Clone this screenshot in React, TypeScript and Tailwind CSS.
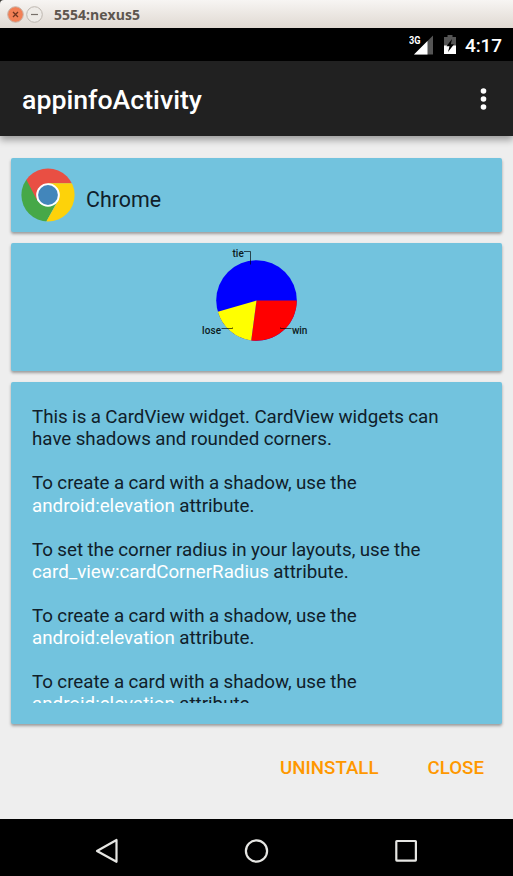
import React from "react";

function TitleBar() {
  return (
    <div className="flex h-7 shrink-0 items-center rounded-tl-[4px] bg-linear-to-b from-[#f7f5f3] to-[#e0d9d2] pl-[7px] pt-px">
      <svg width="38" height="18" viewBox="0 0 38 18" fill="none">
        <circle cx="8.5" cy="8.5" r="7.8" fill="#f28056" stroke="#c9b5aa" />
        <path d="M6 6l5 5M11 6l-5 5" stroke="#70341f" strokeWidth="1.3" />
        <circle cx="27.5" cy="8.5" r="7.8" fill="#eeebe7" stroke="#bdb7b0" />
        <path d="M24 8.5h7" stroke="#77706a" strokeWidth="1.2" />
      </svg>
      <span className="ml-[9px] mt-px whitespace-nowrap font-['Open_Sans',sans-serif] text-[14px] font-bold leading-none tracking-[0.02px] text-[#5d564f]">
        5554:nexus5
      </span>
    </div>
  );
}

function StatusBar() {
  return (
    <div className="flex h-[33px] shrink-0 items-center justify-end bg-black pr-[11px] text-white">
      <svg width="50" height="33" viewBox="0 0 50 33" className="mr-[6px]">
        <path d="M5 26.500L24 7.500V26.500Z" fill="#555" />
        <path d="M5 26.500L18.500 13V26.500Z" fill="white" />
        <path d="M0 7h12v8.500H0Z" fill="black" />
        <text x="0" y="15.500" fontSize="11" fontWeight="700" fill="white" textLength="11.500" lengthAdjust="spacingAndGlyphs">3G</text>
        <path d="M35 9h3.500V7h5v2H47v17H35Z" fill="#555" />
        <path d="M35 17.500h12V26H35Z" fill="white" />
        <path d="M43 11l-5.500 7.200h3L39 24l6-7.700h-3.200Z" fill="black" />
      </svg>
      <span className="mt-px text-[19px] font-medium leading-none tracking-[-0.1px]">4:17</span>
    </div>
  );
}

function AppBar() {
  return (
    <header className="relative flex h-[75px] shrink-0 items-center justify-between bg-[#212121] pl-[22px] pr-[26px] pt-[3px] text-white shadow-[0_4px_7px_rgba(0,0,0,0.35)]">
      <h1 className="text-[26.7px] font-medium leading-none">appinfoActivity</h1>
      <svg width="7" height="24" viewBox="0 0 7 24" fill="white" className="-mt-[2px]">
        <circle cx="3.500" cy="4" r="2.8" />
        <circle cx="3.500" cy="12" r="2.8" />
        <circle cx="3.500" cy="20" r="2.8" />
      </svg>
    </header>
  );
}

function ChromeLogo() {
  return (
    <svg width="54" height="54" viewBox="0 0 54 54">
      <defs>
        <clipPath id="disc"><circle cx="27" cy="27" r="26.6" /></clipPath>
      </defs>
      <g clipPath="url(#disc)">
        <path d="M0 0H54V15.200H27L15 33L5 12L0 8Z" fill="#e94f43" />
        <path d="M0 8L5.500 12L16.500 33L27 38L37 32L24 56H0Z" fill="#46a848" />
        <path d="M27 15.200H54V54H25L37.500 32Z" fill="#fdd20a" />
      </g>
      <circle cx="27" cy="27" r="11.8" fill="white" />
      <circle cx="27" cy="27" r="9.9" fill="#4286bb" />
    </svg>
  );
}

function PieChart() {
  return (
    <svg width="120" height="100" viewBox="197 243 120 100" fontSize="10" fill="#0b1a20">
      <circle cx="256.500" cy="300.500" r="40.300" fill="#00f" />
      <path d="M256.500 300.500H296.800A40.300 40.300 0 0 1 251.200 340.450Z" fill="#f00" />
      <path d="M256.500 300.500L251.200 340.450A40.300 40.300 0 0 1 217.800 311.700Z" fill="#ff0" />
      <path d="M244 251.500h6.500v13M221.500 328.500h11v-1M291.500 328.500h-11v-1" fill="none" stroke="#000" strokeOpacity=".65" strokeWidth="1" />
      <text x="232.500" y="257" fontWeight="500" textLength="11.300">tie</text>
      <text x="202" y="334" fontWeight="500" textLength="19">lose</text>
      <text x="292" y="334" fontWeight="500" textLength="15.300">win</text>
    </svg>
  );
}

function Card({ className, children }: { className: string; children: React.ReactNode }) {
  return (
    <section className={`shrink-0 rounded-[2px] bg-[#72c3de] shadow-[0_2px_3px_rgba(0,0,0,0.35)] ${className}`}>
      {children}
    </section>
  );
}

function Paragraph({ first, term, rest }: { first: string; term?: string; rest: string }) {
  return (
    <p className="mb-[22px] whitespace-nowrap">
      {first}
      <br />
      {term && <span className="text-white">{term}</span>}
      {rest}
    </p>
  );
}

function NavBar() {
  return (
    <nav className="flex h-[57px] shrink-0 bg-black">
      <svg width="513" height="57" viewBox="0 819 513 57" fill="none" stroke="#e6e6e3" strokeWidth="2.200" strokeLinejoin="round">
        <path d="M97 851L116.500 840V861.800Z" />
        <circle cx="256.500" cy="851" r="10.600" />
        <rect x="396.300" y="841" width="19.600" height="19.600" rx=".5" />
      </svg>
    </nav>
  );
}

export default function App() {
  return (
    <div className="flex h-[876px] w-[513px] flex-col overflow-hidden bg-[#3c3b37] font-[Roboto,sans-serif]">
      <TitleBar />
      <StatusBar />
      <div className="flex min-h-0 flex-1 flex-col bg-[#eee]">
        <AppBar />
        <main className="flex flex-col gap-[11px] pl-[11px] pr-[11px] pt-[22px]">
          <Card className="flex h-[74px] pl-[10px] pt-[10px]">
            <ChromeLogo />
            <h2 className="ml-[11px] mt-[19px] text-[21.4px] leading-[26px] text-[#10202a]">Chrome</h2>
          </Card>
          <Card className="flex h-[128px] justify-center">
            <PieChart />
          </Card>
          <Card className="h-[342px] px-[21px] pb-[21px] pt-6">
            <div className="h-[297px] overflow-hidden pt-[0.4px] text-[18.75px] leading-[22.05px] text-[#10202a] [word-spacing:-0.3px]">
              <Paragraph first="This is a CardView widget. CardView widgets can" rest="have shadows and rounded corners." />
              <Paragraph first="To create a card with a shadow, use the" term="android:elevation" rest=" attribute." />
              <Paragraph first="To set the corner radius in your layouts, use the" term="card_view:cardCornerRadius" rest=" attribute." />
              <Paragraph first="To create a card with a shadow, use the" term="android:elevation" rest=" attribute." />
              <Paragraph first="To create a card with a shadow, use the" term="android:elevation" rest=" attribute." />
            </div>
          </Card>
        </main>
        <div className="mt-[33px] flex justify-end gap-[49px] pr-[29px] text-[18.7px] font-medium leading-[22px] text-[#ff9800]">
          <button>UNINSTALL</button>
          <button>CLOSE</button>
        </div>
      </div>
      <NavBar />
    </div>
  );
}
